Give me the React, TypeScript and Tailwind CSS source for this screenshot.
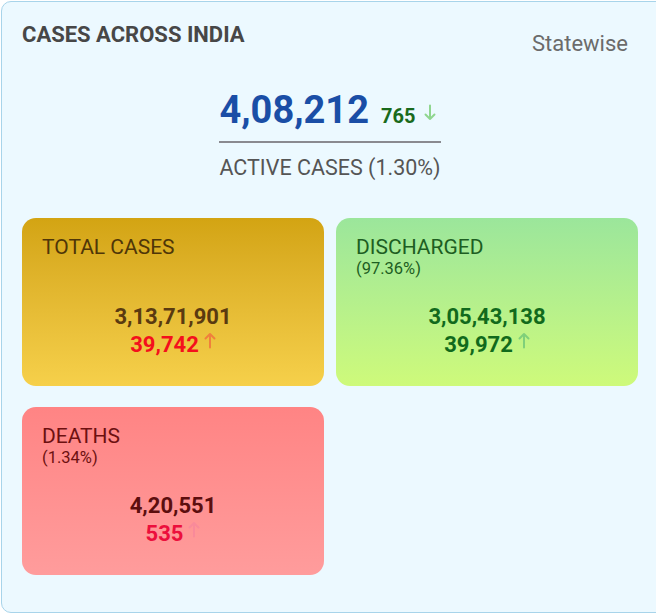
import React from 'react';

type Stat = {
  title: string;
  pct?: string;
  value: string;
  delta: string;
  bg: string;
  titleColor: string;
  valueColor: string;
  deltaColor: string;
  arrowColor: string;
};

const stats: Stat[] = [
  {
    title: 'TOTAL CASES',
    value: '3,13,71,901',
    delta: '39,742',
    bg: 'bg-gradient-to-b from-[#d3a412] to-[#f6d04a]',
    titleColor: 'text-[#4f3608]',
    valueColor: 'text-[#5a3a10]',
    deltaColor: 'text-[#f4101c]',
    arrowColor: '#f0803c',
  },
  {
    title: 'DISCHARGED',
    pct: '(97.36%)',
    value: '3,05,43,138',
    delta: '39,972',
    bg: 'bg-gradient-to-b from-[#9be69b] to-[#cefa7a]',
    titleColor: 'text-[#1d5e22]',
    valueColor: 'text-[#116a1c]',
    deltaColor: 'text-[#116a1c]',
    arrowColor: '#7fd07a',
  },
  {
    title: 'DEATHS',
    pct: '(1.34%)',
    value: '4,20,551',
    delta: '535',
    bg: 'bg-gradient-to-b from-[#ff8484] to-[#ff9c9c]',
    titleColor: 'text-[#6d1010]',
    valueColor: 'text-[#5c0e0e]',
    deltaColor: 'text-[#ec0f3c]',
    arrowColor: '#f98a9a',
  },
];

function Arrow({ color, down = false }: { color: string; down?: boolean }) {
  return (
    <svg width="12" height="17" viewBox="0 0 12 17" fill="none" stroke={color} strokeWidth={2} strokeLinecap="round" strokeLinejoin="round">
      {down ? <path d="M6 1.5v13.5M1.5 10.5L6 15l4.5-4.5" /> : <path d="M6 15.5V2M1.5 6.5L6 2l4.5 4.5" />}
    </svg>
  );
}

function StatCard({ s }: { s: Stat }) {
  return (
    <div className={`h-[168px] rounded-[14px] px-5 pt-[16px] ${s.bg}`}>
      <div className="h-[69px]">
        <div className={`text-[21px] leading-[26px] ${s.titleColor}`}>{s.title}</div>
        {s.pct && <div className={`text-[16.5px] leading-[18px] ${s.titleColor}`}>{s.pct}</div>}
      </div>
      <div className="flex flex-col items-center">
        <div className={`text-[22px] font-bold leading-7 ${s.valueColor}`}>{s.value}</div>
        <div className="flex items-center gap-[5px]">
          <span className={`text-[22px] font-bold leading-7 ${s.deltaColor}`}>{s.delta}</span>
          <span className="-mt-[9px]">
            <Arrow color={s.arrowColor} />
          </span>
        </div>
      </div>
    </div>
  );
}

export default function App() {
  return (
    <div className="h-[615px] w-[656px] overflow-hidden bg-white font-['Roboto',sans-serif]">
      <div className="ml-px mt-px h-[612px] w-[670px] rounded-[10px] border border-[#a8d4ea] bg-[#ecf9ff] pl-5 pt-[20px]">
        <div className="flex w-[606px] items-start justify-between">
          <h2 className="text-[22px] font-bold leading-[26px] text-[#474747]">CASES ACROSS INDIA</h2>
          <span className="mt-[9px] text-[22px] leading-[26px] text-[#6b6b6b]">Statewise</span>
        </div>

        <div className="flex w-[616px] justify-center">
          <div className="mt-[33px] flex flex-col">
            <div className="flex items-baseline border-b-2 border-[#8a8a90] pb-[11px]">
              <span className="text-[38px] font-bold leading-[40px] text-[#1a4ea6]">4,08,212</span>
              <span className="ml-[12px] text-[20px] font-bold leading-6 text-[#196a1c]">765</span>
              <span className="ml-[9px] self-center pt-1">
                <Arrow color="#8fd68f" down />
              </span>
            </div>
            <div className="mt-[12px] text-[21.5px] leading-[26px] text-[#555555]">ACTIVE CASES (1.30%)</div>
          </div>
        </div>

        <div className="mt-[37px] grid grid-cols-[302px_302px] gap-x-3 gap-y-[21px]">
          {stats.map((s) => (
            <StatCard key={s.title} s={s} />
          ))}
        </div>
      </div>
    </div>
  );
}
